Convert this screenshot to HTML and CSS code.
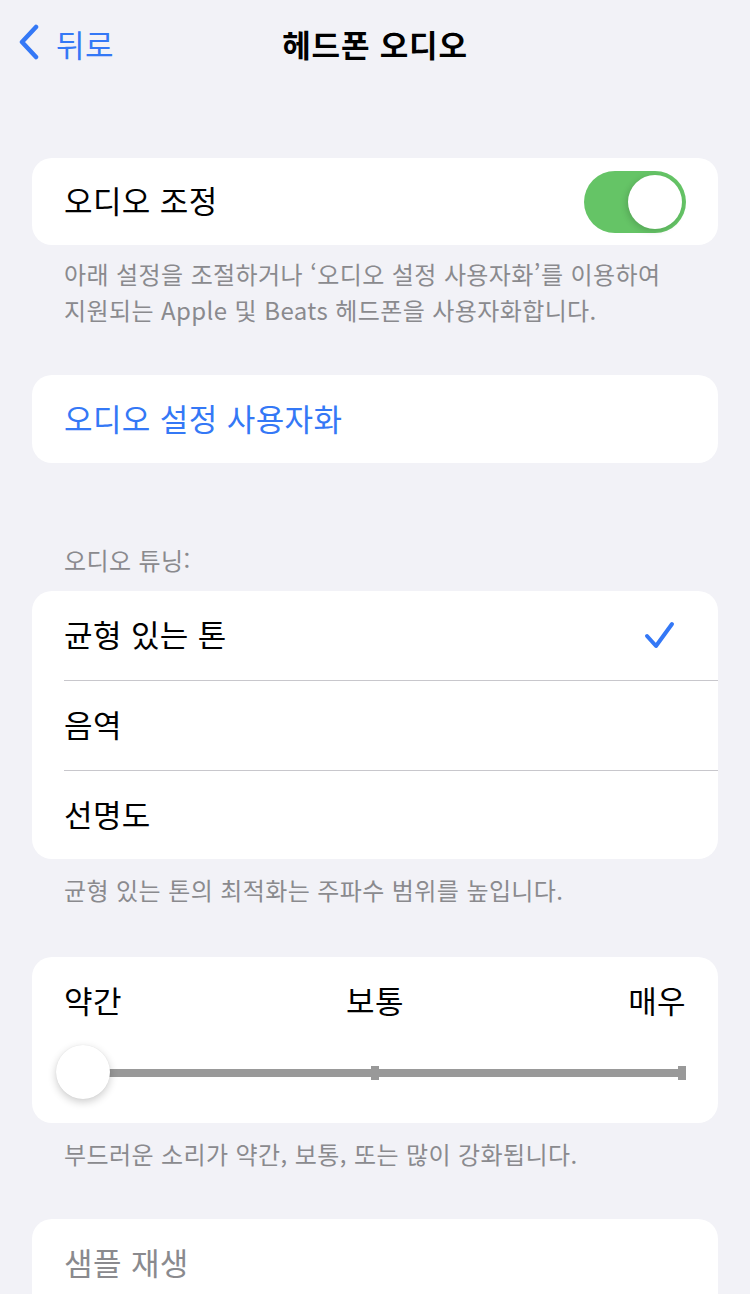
FILE: index.html
```html
<!DOCTYPE html>
<html lang="ko">
<head>
    <meta charset="UTF-8">
    <meta name="viewport" content="width=device-width, initial-scale=1.0">
    <title>헤드폰 오디오</title>
    <link rel="stylesheet" href="styles.css">
</head>
<body>

<div class="nav-bar">
    <a class="nav-back" href="#">
        <svg class="back-chevron" width="24" height="36" viewBox="0 0 24 36">
            <path d="M19 3 L5 18 L19 33" fill="none" stroke="#3478f6" stroke-width="4.5" stroke-linecap="round" stroke-linejoin="round"/>
        </svg>
        <span>뒤로</span>
    </a>
    <div class="nav-title">헤드폰 오디오</div>
    <div></div>
</div>

<div class="settings">
    <div class="card card-first">
        <div class="row">
            <span class="row-label">오디오 조정</span>
            <div class="switch on"><div class="switch-knob"></div></div>
        </div>
    </div>
    <div class="footer-note">아래 설정을 조절하거나 ‘오디오 설정 사용자화’를 이용하여<br>지원되는 Apple 및 Beats 헤드폰을 사용자화합니다.</div>

    <div class="card card-custom">
        <div class="row">
            <span class="row-label link">오디오 설정 사용자화</span>
        </div>
    </div>

    <div class="group-header">오디오 튜닝:</div>
    <div class="card">
        <div class="row with-line">
            <span class="row-label">균형 있는 톤</span>
            <svg class="check" width="34" height="32" viewBox="0 0 34 32">
                <path d="M4 16 L13 26 L29 4" fill="none" stroke="#3478f6" stroke-width="4" stroke-linecap="round" stroke-linejoin="round"/>
            </svg>
        </div>
        <div class="row with-line">
            <span class="row-label">음역</span>
        </div>
        <div class="row">
            <span class="row-label">선명도</span>
        </div>
    </div>
    <div class="footer-note single">균형 있는 톤의 최적화는 주파수 범위를 높입니다.</div>

    <div class="card slider-card">
        <div class="slider-labels">
            <span>약간</span>
            <span>보통</span>
            <span>매우</span>
        </div>
        <div class="slider">
            <div class="slider-track"></div>
            <div class="slider-tick mid"></div>
            <div class="slider-tick end"></div>
            <div class="slider-knob"></div>
        </div>
    </div>
    <div class="footer-note single">부드러운 소리가 약간, 보통, 또는 많이 강화됩니다.</div>

    <div class="card card-last">
        <div class="row">
            <span class="row-label muted">샘플 재생</span>
        </div>
    </div>
</div>

</body>
</html>
```

FILE: styles.css
```css
body {
    margin: 0;
    background-color: #f2f2f7;
    font-family: 'Noto Sans CJK KR', 'Noto Sans', sans-serif;
    color: #000;
    overflow: hidden;
}
.nav-bar {
    display: grid;
    grid-template-columns: 1fr auto 1fr;
    align-items: center;
    height: 86px;
}
.nav-back {
    display: flex;
    align-items: center;
    padding-left: 17px;
    color: #3478f6;
    text-decoration: none;
    font-size: 31px;
    letter-spacing: 0.5px;
}
.back-chevron {
    margin-right: 15px;
    margin-top: -2px;
}
.nav-title {
    font-size: 31px;
    font-weight: 600;
    letter-spacing: 0.8px;
}
.settings {
    padding: 0 32px;
}
.card {
    background-color: #ffffff;
    border-radius: 20px;
    overflow: hidden;
}
.card-first {
    margin-top: 72px;
}
.card-custom {
    margin-top: 47px;
}
.card-last {
    margin-top: 47px;
    height: 120px;
}
.row {
    display: flex;
    align-items: center;
    justify-content: space-between;
    height: 88px;
    margin-left: 32px;
    padding-right: 32px;
    box-sizing: border-box;
}
.card-first .row {
    height: 87px;
}
.row.with-line {
    height: 90px;
    border-bottom: 1px solid #c8c7cc;
}
.row-label {
    font-size: 31px;
    letter-spacing: 0.4px;
    padding-bottom: 4px;
}
.row-label.link {
    color: #3478f6;
}
.row-label.muted {
    color: #8a8a8e;
}
.switch {
    width: 102px;
    height: 62px;
    border-radius: 31px;
    background-color: #e9e9eb;
    position: relative;
}
.switch.on {
    background-color: #65c466;
}
.switch-knob {
    position: absolute;
    top: 4px;
    right: 4px;
    width: 54px;
    height: 54px;
    border-radius: 50%;
    background-color: #ffffff;
    box-shadow: -2px 2px 6px rgba(0, 0, 0, 0.15);
}
.check {
    margin-right: 9px;
}
.footer-note {
    margin-top: 11px;
    padding: 0 32px;
    font-size: 24px;
    line-height: 36px;
    color: #8a8a8e;
    letter-spacing: 0.4px;
    white-space: nowrap;
}
.footer-note.single {
    margin-top: 13px;
}
.group-header {
    margin-top: 79px;
    padding: 0 32px;
    font-size: 24px;
    line-height: 36px;
    color: #8a8a8e;
    margin-bottom: 13px;
    letter-spacing: 0.4px;
}
.slider-card {
    margin-top: 49px;
    height: 166px;
    padding: 24px 32px 0;
    box-sizing: border-box;
}
.slider-labels {
    display: flex;
    justify-content: space-between;
    font-size: 31px;
    line-height: 38px;
    letter-spacing: 0.4px;
}
.slider {
    position: relative;
    height: 54px;
    margin-top: 26px;
}
.slider-track {
    position: absolute;
    left: 30px;
    right: 0;
    top: 24px;
    height: 8px;
    background-color: #999999;
}
.slider-tick {
    position: absolute;
    top: 21px;
    width: 8px;
    height: 14px;
    background-color: #999999;
}
.slider-tick.mid {
    left: 307px;
}
.slider-tick.end {
    right: 0;
}
.slider-knob {
    position: absolute;
    left: -8px;
    top: 0;
    width: 54px;
    height: 54px;
    border-radius: 50%;
    background-color: #ffffff;
    box-shadow: 0 3px 8px rgba(0, 0, 0, 0.2), 0 0 1px rgba(0, 0, 0, 0.1);
}
```
